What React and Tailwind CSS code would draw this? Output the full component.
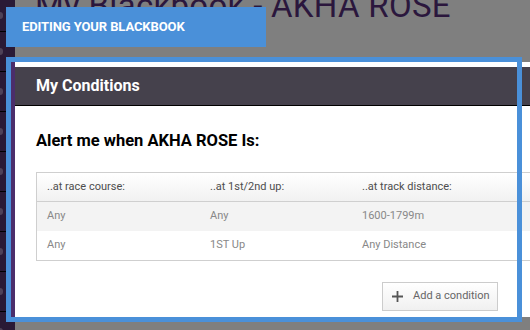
import React from "react";

const rows = [
  ["Any", "Any", "1600-1799m"],
  ["Any", "1ST Up", "Any Distance"],
];

export default function App() {
  return (
    <div
      className="relative w-[530px] h-[330px] overflow-hidden bg-[#7f7f7f] flex"
      style={{ fontFamily: "Roboto, 'Liberation Sans', sans-serif" }}
    >
      {/* background page: left strip */}
      <div className="w-[15px] shrink-0 h-full bg-[#2a1a36] flex flex-col">
        {[...Array(9)].map((_, i) => (
          <div key={i} className="h-[40px] shrink-0 border-b border-black flex items-center first:h-[32px]">
            <div className="w-[3px] h-[7px] rounded-r-full bg-[#4f4258]" />
          </div>
        ))}
      </div>
      {/* background page: title */}
      <div className="flex-1">
        <div className="mt-[-11px] ml-[20px] text-[33px] leading-[33px] tracking-[0.3px] text-[#2b173d] whitespace-nowrap">
          My Blackbook - AKHA ROSE
        </div>
      </div>

      {/* label */}
      <div className="absolute left-[6px] top-[7px] w-[260px] h-[40px] bg-[#4a90d9] flex items-center pl-[16px]">
        <span className="text-white font-bold text-[13px] tracking-[-0.1px] whitespace-nowrap">
          EDITING YOUR BLACKBOOK
        </span>
      </div>

      {/* modal */}
      <div className="absolute left-[11px] top-[62px] w-[545px] h-[255px] flex">
        <div className="w-[4px] shrink-0 bg-[#4b2e6b]" />
        <div className="flex-1 bg-white pt-[5px] flex flex-col">
          <div className="h-[39px] shrink-0 bg-[#45414c] border-b border-black flex items-center pl-[21px]">
            <span className="text-white font-bold text-[16px]">My Conditions</span>
          </div>
          <div className="h-[66px] shrink-0 pt-[5px] flex items-center pl-[21px]">
            <span className="text-black font-bold text-[16.5px] whitespace-nowrap">
              Alert me when AKHA ROSE Is:
            </span>
          </div>
          <div className="ml-[21px] w-[520px] border-l border-[#cfcfcf] text-[11px]">
            <div className="h-[30px] flex items-center border-t border-b border-[#cfcfcf] bg-gradient-to-b from-white to-[#f1f1f1] text-[#4d4d4d]">
              <div className="w-[163px] pl-[10px]">..at race course:</div>
              <div className="w-[152px] pl-[10px]">..at 1st/2nd up:</div>
              <div className="pl-[10px]">..at track distance:</div>
            </div>
            {rows.map((r, i) => (
              <div
                key={i}
                className={
                  i === 0
                    ? "h-[29px] flex items-center bg-[#f3f3f3] text-[#888]"
                    : "h-[30px] flex items-center bg-white border-b border-[#cfcfcf] text-[#888]"
                }
              >
                <div className="w-[163px] pl-[10px]">{r[0]}</div>
                <div className="w-[152px] pl-[10px]">{r[1]}</div>
                <div className="pl-[10px]">{r[2]}</div>
              </div>
            ))}
          </div>
          <div className="mt-[21px] ml-[367px] w-[116px] h-[29px] border border-[#cccccc] bg-gradient-to-b from-white to-[#f0f0f0] flex items-center pl-[9px] gap-[10px]">
            <svg width="11" height="11" viewBox="0 0 11 11">
              <path d="M5.5 0V11M0 5.5H11" stroke="#555" strokeWidth="1.8" />
            </svg>
            <span className="text-[11px] text-[#666] whitespace-nowrap">Add a condition</span>
          </div>
        </div>
      </div>

      {/* blue frame */}
      <div className="absolute left-[6px] top-[57px] w-[516px] h-[265px] border-[5px] border-[#4a90d9] pointer-events-none" />
    </div>
  );
}
